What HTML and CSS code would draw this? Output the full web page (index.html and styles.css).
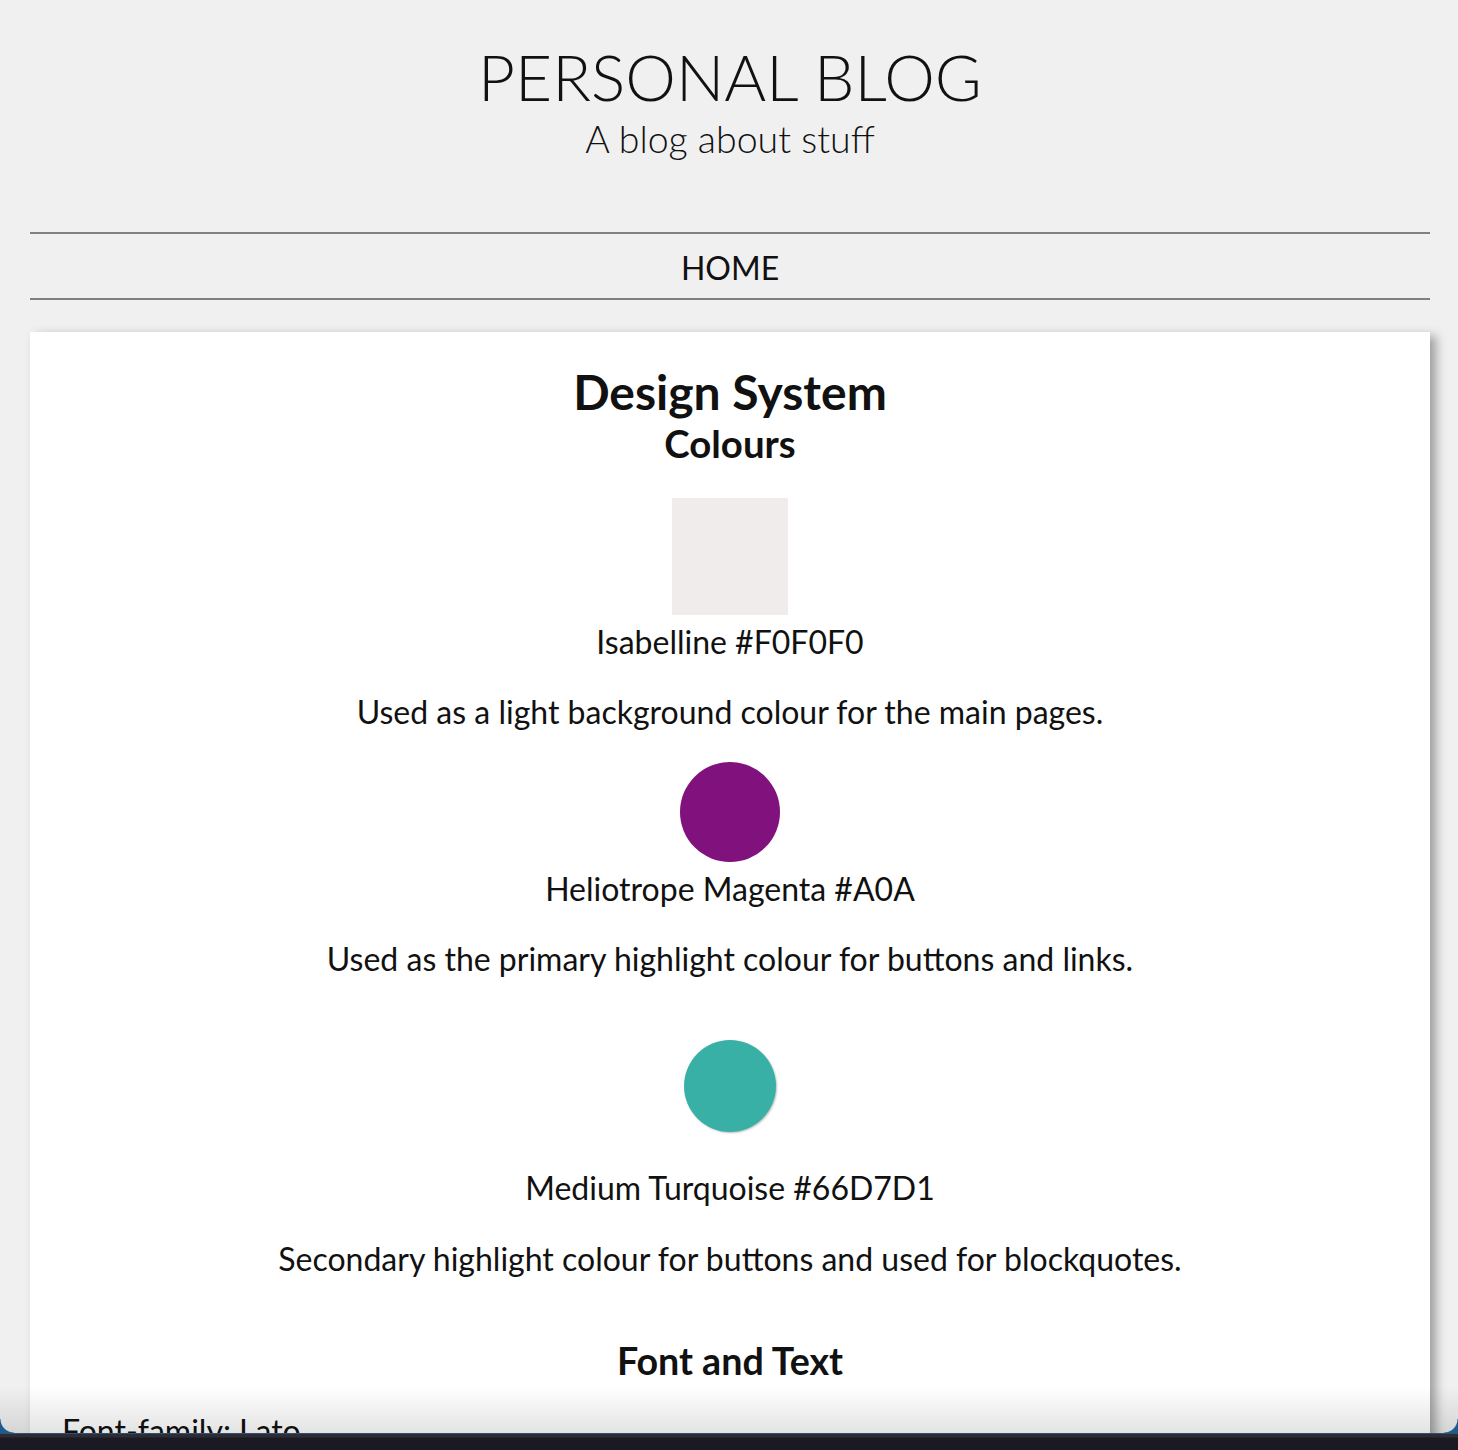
FILE: index.html
```html
<!DOCTYPE html>
<html lang="en">
<head>
<meta charset="utf-8">
<title>Personal Blog – Design System</title>
<link rel="stylesheet" href="styles.css">
</head>
<body>
<div class="page">
  <header class="masthead">
    <h1 class="site-title">PERSONAL BLOG</h1>
    <p class="tagline">A blog about stuff</p>
  </header>
  <nav class="main-nav">
    <a class="nav-link" href="#">HOME</a>
  </nav>
  <main class="card">
    <h1 class="page-title">Design System</h1>
    <h2 class="section-title">Colours</h2>

    <div class="swatch swatch-square"></div>
    <p class="swatch-name">Isabelline #F0F0F0</p>
    <p class="swatch-desc">Used as a light background colour for the main pages.</p>

    <div class="swatch swatch-magenta"></div>
    <p class="swatch-name">Heliotrope Magenta #A0A</p>
    <p class="swatch-desc">Used as the primary highlight colour for buttons and links.</p>

    <div class="swatch swatch-teal"></div>
    <p class="swatch-name swatch-name-teal">Medium Turquoise #66D7D1</p>
    <p class="swatch-desc">Secondary highlight colour for buttons and used for blockquotes.</p>

    <h2 class="section-title section-title-spaced">Font and Text</h2>
    <p class="font-line">Font-family: Lato</p>
    <p class="font-line">Headings are bold, body text is regular weight.</p>
    <p class="font-line">Base font size: 2rem</p>
  </main>
</div>
<div class="screen-fade"></div>
<div class="corner corner-left"></div>
<div class="corner corner-right"></div>
<div class="dock"></div>
</body>
</html>
```
FILE: styles.css
```css
html, body {
  margin: 0;
  padding: 0;
}

body {
  background: #f0f0f0;
  color: #111;
  font-family: Lato, "Noto Sans", "Liberation Sans", sans-serif;
  font-size: 32px;
  overflow: hidden;
}

.page {
  padding: 0 28px 60px 30px;
}

.masthead {
  text-align: center;
  padding-top: 39px;
}

.site-title {
  margin: 0;
  font-size: 64px;
  font-weight: 300;
  line-height: 1.2;
}

.tagline {
  margin: 0;
  font-size: 37.5px;
  font-weight: 300;
  line-height: 45px;
}

.main-nav {
  margin-top: 71px;
  border-top: 2px solid #808080;
  border-bottom: 2px solid #808080;
  padding: 15px 0 11px;
  text-align: center;
  line-height: 38px;
}

.nav-link {
  color: #111;
  text-decoration: none;
  font-size: 32px;
}

.card {
  margin-top: 32px;
  background: #fff;
  padding: 32px;
  text-align: center;
  box-shadow: 6px 4px 10px rgba(0, 0, 0, 0.35);
}

.page-title {
  margin: -2px 0 0;
  font-size: 48px;
  font-weight: 700;
  line-height: 60px;
}

.section-title {
  margin: 0;
  font-size: 38.4px;
  font-weight: 700;
  line-height: 42px;
}

.section-title-spaced {
  margin-top: 62px;
  font-size: 37.6px;
}

.swatch {
  display: block;
  margin-left: auto;
  margin-right: auto;
}

.swatch-square {
  margin-top: 34px;
  width: 116px;
  height: 117px;
  background: #f0ecec;
}

.swatch-magenta {
  margin-top: 30px;
  width: 100px;
  height: 100px;
  border-radius: 50%;
  background: #80117d;
}

.swatch-teal {
  margin-top: 62px;
  width: 92px;
  height: 92px;
  border-radius: 50%;
  background: #38b0a6;
  box-shadow: 1px 1px 2px rgba(0, 0, 0, 0.25);
}

.swatch-name {
  margin: 8px 0 0;
  line-height: 38.4px;
}

.swatch-name-teal {
  margin-top: 37px;
}

.swatch-desc {
  margin: 32px 0 0;
  line-height: 38.4px;
}

.font-line {
  margin: 30px 0 0;
  text-align: left;
  line-height: 38.4px;
}

.screen-fade {
  position: fixed;
  left: 0;
  right: 0;
  bottom: 17px;
  height: 46px;
  background: linear-gradient(to bottom, rgba(0, 0, 0, 0), rgba(0, 0, 0, 0.11));
  pointer-events: none;
}

.corner {
  position: fixed;
  bottom: 17px;
  width: 14px;
  height: 14px;
}

.corner-left {
  left: 0;
  background: radial-gradient(circle at 100% 0, rgba(0, 0, 0, 0) 13px, #1d5a8e 14px);
}

.corner-right {
  right: 0;
  background: radial-gradient(circle at 0 0, rgba(0, 0, 0, 0) 13px, #1d5a8e 14px);
}

.dock {
  position: fixed;
  left: 0;
  right: 0;
  bottom: 0;
  height: 16px;
  border-top: 1px solid #2a5470;
  background: linear-gradient(to bottom, #2d2b35 0, #2d2b35 3px, #1b1921 4px, #1b1921 100%);
}
```
